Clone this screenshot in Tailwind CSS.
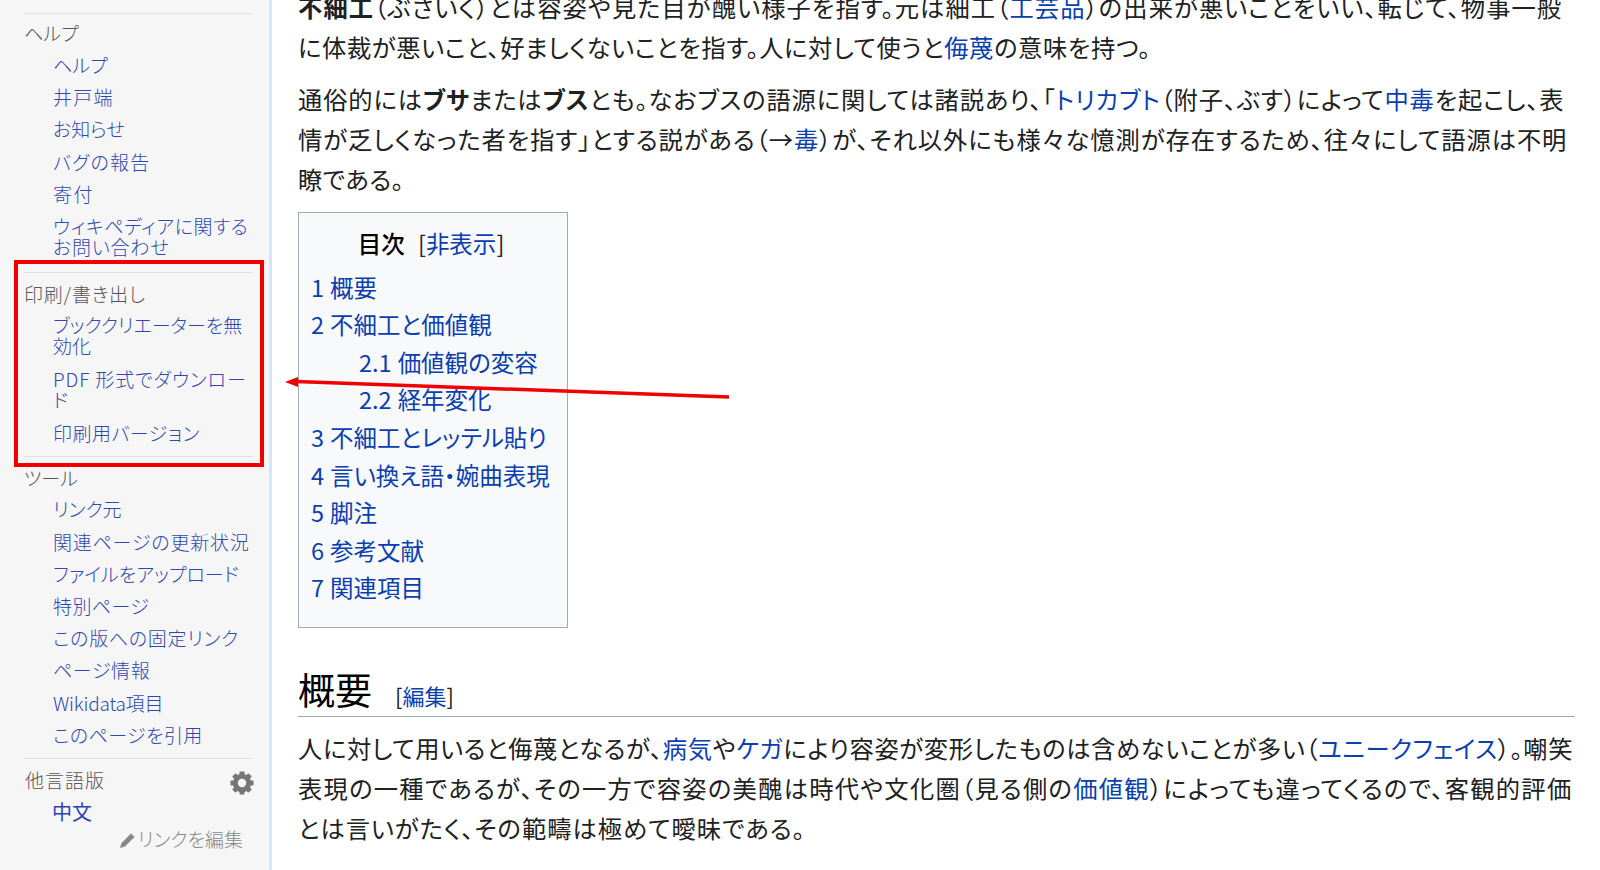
<!DOCTYPE html>
<html lang="ja">
<head>
  <meta charset="UTF-8" />
  <title>不細工</title>
  <script src="https://cdn.jsdelivr.net/npm/@tailwindcss/browser@4"></script>
</head>
<body class="relative h-[870px] overflow-hidden bg-white font-['Noto_Sans_CJK_JP','Noto_Sans',sans-serif]">
  <div class="flex h-[870px]">
    <!-- sidebar -->
    <aside class="w-[272px] shrink-0 bg-[#f6f6f6] border-r-[3px] border-[#d5e6f5] pl-[24px] pr-[16px] pt-[13px] text-[19px] font-light leading-[21.5px] text-[#2f48ad] whitespace-nowrap [font-feature-settings:'palt']">
      <div class="h-px bg-[#e0e0e0]"></div>
      <h3 class="mt-[8px] h-[21px] text-[#555]">ヘルプ</h3>
      <ul class="mt-[11px] pl-[29px] flex flex-col gap-[10.7px]">
        <li>ヘルプ</li>
        <li class="tracking-[1.3px]">井戸端</li>
        <li>お知らせ</li>
        <li class="tracking-[1.2px]">バグの報告</li>
        <li class="tracking-[1.5px]">寄付</li>
        <li class="h-[44px]"><span class="block tracking-[0.55px]">ウィキペディアに関する</span><span class="block tracking-[0.8px]">お問い合わせ</span></li>
      </ul>
      <div class="mt-[13px] h-px bg-[#e0e0e0]"></div>
      <h3 class="mt-[10px] h-[21px] text-[#555] tracking-[0.8px]">印刷/書き出し</h3>
      <ul class="mt-[10px] pl-[29px] flex flex-col gap-[11px]">
        <li>ブッククリエーターを無<br>効化</li>
        <li class="tracking-[0.9px]">PDF 形式でダウンロー<br>ド</li>
        <li class="tracking-[0.5px]">印刷用バージョン</li>
      </ul>
      <div class="mt-[13px] h-px bg-[#e0e0e0]"></div>
      <h3 class="mt-[10px] h-[21px] text-[#555]">ツール</h3>
      <ul class="mt-[10px] pl-[29px] flex flex-col gap-[10.7px]">
        <li>リンク元</li>
        <li class="tracking-[0.8px]">関連ページの更新状況</li>
        <li>ファイルをアップロード</li>
        <li class="tracking-[0.4px]">特別ページ</li>
        <li class="tracking-[0.7px]">この版への固定リンク</li>
        <li class="tracking-[0.6px]">ページ情報</li>
        <li class="tracking-[-0.2px]">Wikidata項目</li>
        <li class="tracking-[0.4px]">このページを引用</li>
      </ul>
      <div class="mt-[13px] h-px bg-[#e0e0e0]"></div>
      <div class="mt-[10px] pl-px flex items-center justify-between h-[21px] text-[#555]">
        <h3 class="tracking-[1px]">他言語版</h3>
        <svg class="w-[24px] h-[24px] mt-[6px] mr-[-1px] text-[#777]" viewBox="0 0 24 24" fill="currentColor">
          <circle cx="12" cy="12" r="6.700" fill="none" stroke="currentColor" stroke-width="5"/>
          <rect x="9.500" y="0.500" width="5" height="5" rx="0.800"/>
          <rect x="9.500" y="18.500" width="5" height="5" rx="0.800"/>
          <rect x="0.500" y="9.500" width="5" height="5" rx="0.800"/>
          <rect x="18.500" y="9.500" width="5" height="5" rx="0.800"/>
          <rect x="9.500" y="0.500" width="5" height="5" rx="0.800" transform="rotate(45 12 12)"/>
          <rect x="9.500" y="18.500" width="5" height="5" rx="0.800" transform="rotate(45 12 12)"/>
          <rect x="0.500" y="9.500" width="5" height="5" rx="0.800" transform="rotate(45 12 12)"/>
          <rect x="18.500" y="9.500" width="5" height="5" rx="0.800" transform="rotate(45 12 12)"/>
        </svg>
      </div>
      <ul class="mt-[11px] pl-[28px]"><li class="text-[#2a44b8] text-[20px] font-normal">中文</li></ul>
      <div class="mt-[5px] mr-[10px] flex items-center justify-end gap-[2px] text-[#888]">
        <svg class="w-[17px] h-[17px] mt-[3px] text-[#888]" viewBox="0 0 17 17" fill="currentColor"><path d="M12 1.500 15.500 5 6 14.500 1 16l1.500-5z"/></svg>
        <span>リンクを編集</span>
      </div>
    </aside>
    <!-- article -->
    <main class="flex-1 pl-[26px] pr-[25px] -mt-[13px] text-[24.3px] leading-[40px] text-[#202122] whitespace-nowrap [font-feature-settings:'palt']">
      <p>
        <span class="block tracking-[1.08px]"><b class="font-bold">不細工</b>（ぶさいく）とは容姿や見た目が醜い様子を指す。元は細工（<a class="text-[#0b3fb0]">工芸品</a>）の出来が悪いことをいい、転じて、物事一般</span>
        <span class="block tracking-[0.62px]">に体裁が悪いこと、好ましくないことを指す。人に対して使うと<a class="text-[#0b3fb0]">侮蔑</a>の意味を持つ。</span>
      </p>
      <p class="mt-[12px]">
        <span class="block tracking-[0.84px]">通俗的には<b class="font-bold">ブサ</b>または<b class="font-bold">ブス</b>とも。なおブスの語源に関しては諸説あり、「<a class="text-[#0b3fb0]">トリカブト</a>（附子、ぶす）によって<a class="text-[#0b3fb0]">中毒</a>を起こし、表</span>
        <span class="block tracking-[0.93px]">情が乏しくなった者を指す」とする説がある（→<a class="text-[#0b3fb0]">毒</a>）が、それ以外にも様々な憶測が存在するため、往々にして語源は不明</span>
        <span class="block tracking-[0.4px]">瞭である。</span>
      </p>
      <!-- toc -->
      <nav class="mt-[13px] w-[270px] h-[416px] bg-[#f8f9fa] border border-[#a2a9b1] px-[12px] text-[23.5px] leading-[37.6px] text-[#0b3fb0]">
        <div class="mt-[12px] mb-[6px] pr-[4px] text-center text-black"><span class="font-medium">目次</span> <span class="ml-[8px] text-[#202122]">[<a class="text-[#0b3fb0]">非表示</a>]</span></div>
        <ul>
          <li class="flex gap-[6px]"><span>1</span>概要</li>
          <li class="flex gap-[6px]"><span>2</span>不細工と価値観</li>
          <li class="flex gap-[6px] pl-[48px]"><span>2.1</span>価値観の変容</li>
          <li class="flex gap-[6px] pl-[48px]"><span>2.2</span>経年変化</li>
          <li class="flex gap-[6px]"><span>3</span>不細工とレッテル貼り</li>
          <li class="flex gap-[6px]"><span>4</span>言い換え語・婉曲表現</li>
          <li class="flex gap-[6px]"><span>5</span>脚注</li>
          <li class="flex gap-[6px]"><span>6</span>参考文献</li>
          <li class="flex gap-[6px]"><span>7</span>関連項目</li>
        </ul>
      </nav>
      <h2 class="mt-[36px] h-[53px] pb-[2px] flex items-end border-b border-[#a2a9b1] text-[37px] leading-[50px] text-black">
        概要<span class="ml-[23px] text-[22px] leading-[38px] text-[#202122]">[<a class="text-[#0b3fb0]">編集</a>]</span>
      </h2>
      <p class="mt-[11px]">
        <span class="block tracking-[0.62px]">人に対して用いると侮蔑となるが、<a class="text-[#0b3fb0]">病気</a>や<a class="text-[#0b3fb0]">ケガ</a>により容姿が変形したものは含めないことが多い（<a class="text-[#0b3fb0]">ユニークフェイス</a>）。嘲笑</span>
        <span class="block tracking-[1.25px]">表現の一種であるが、その一方で容姿の美醜は時代や文化圏（見る側の<a class="text-[#0b3fb0]">価値観</a>）によっても違ってくるので、客観的評価</span>
        <span class="block tracking-[0.98px]">とは言いがたく、その範疇は極めて曖昧である。</span>
      </p>
      <p class="mt-[14px]">また、俗語として「不細工」が「不精な様子」を表す場合もあり、必ずしも容姿のみを指す語ではない。</p>
    </main>
  </div>
  <!-- annotation overlay -->
  <div class="absolute left-[14px] top-[260px] w-[250px] h-[207px] border-[4px] border-[#f00000]"></div>
  <svg class="absolute left-0 top-0 w-[1600px] h-[870px] pointer-events-none" viewBox="0 0 1600 870">
    <path d="M296 381.500 729 397" stroke="#f00000" stroke-width="3.500" fill="none"/>
    <path d="M285 382 298 377 298 387z" fill="#f00000"/>
  </svg>
</body>
</html>
